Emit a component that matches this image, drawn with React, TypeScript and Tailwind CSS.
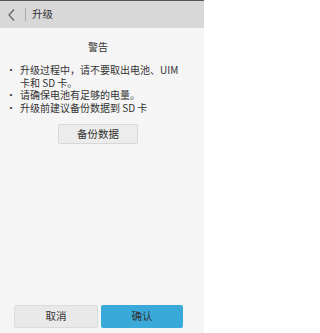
import React from "react";

export default function App() {
  const font = { fontFamily: '"Noto Sans CJK SC", "Noto Sans", sans-serif' };
  return (
    <div className="w-[204px] h-[333px] flex flex-col bg-[#f5f5f5] text-[#333]" style={font}>
      <div className="h-px bg-[#555]" />
      <div className="h-[27px] bg-[#d8d8d8] flex items-center">
        <svg width="22" height="27" viewBox="0 0 22 27" className="shrink-0">
          <path d="M14 8.5 L9 14 L14 19.5" fill="none" stroke="#666" strokeWidth="1.3" />
        </svg>
        <div className="w-px h-[13px] bg-[#aaa] ml-[3px]" />
        <span className="ml-[6px] text-[10.5px] leading-none">升级</span>
      </div>
      <div className="flex flex-col pt-[13px] pr-[8px]">
        <div className="text-center text-[10px] leading-[12px]">警告</div>
        <ul className="mt-[11px] pl-[6px] pr-[16px] text-[10px] leading-[12.7px]">
          <li className="flex">
            <span className="w-[14px] shrink-0">·</span>
            <span>升级过程中，请不要取出电池、UIM 卡和 SD 卡。</span>
          </li>
          <li className="flex">
            <span className="w-[14px] shrink-0">·</span>
            <span>请确保电池有足够的电量。</span>
          </li>
          <li className="flex">
            <span className="w-[14px] shrink-0">·</span>
            <span>升级前建议备份数据到 SD 卡</span>
          </li>
        </ul>
        <div className="flex justify-center mt-[9px]">
          <button className="w-[80px] h-[20px] rounded-[2px] bg-[#ececec] border border-[#d8d8d8] text-[10.5px] leading-none text-[#333]">
            备份数据
          </button>
        </div>
      </div>
      <div className="flex-1" />
      <div className="flex gap-[3px] pl-[14px] pr-[21px] pb-[5px]">
        <button className="flex-1 h-[23px] rounded-[2px] bg-[#e9e9e9] border border-[#dcdcdc] text-[10.5px] leading-none text-[#333]">
          取消
        </button>
        <button className="flex-1 h-[23px] rounded-[2px] bg-[#39a9d9] text-[10.5px] leading-none text-[#333]">
          确认
        </button>
      </div>
    </div>
  );
}
